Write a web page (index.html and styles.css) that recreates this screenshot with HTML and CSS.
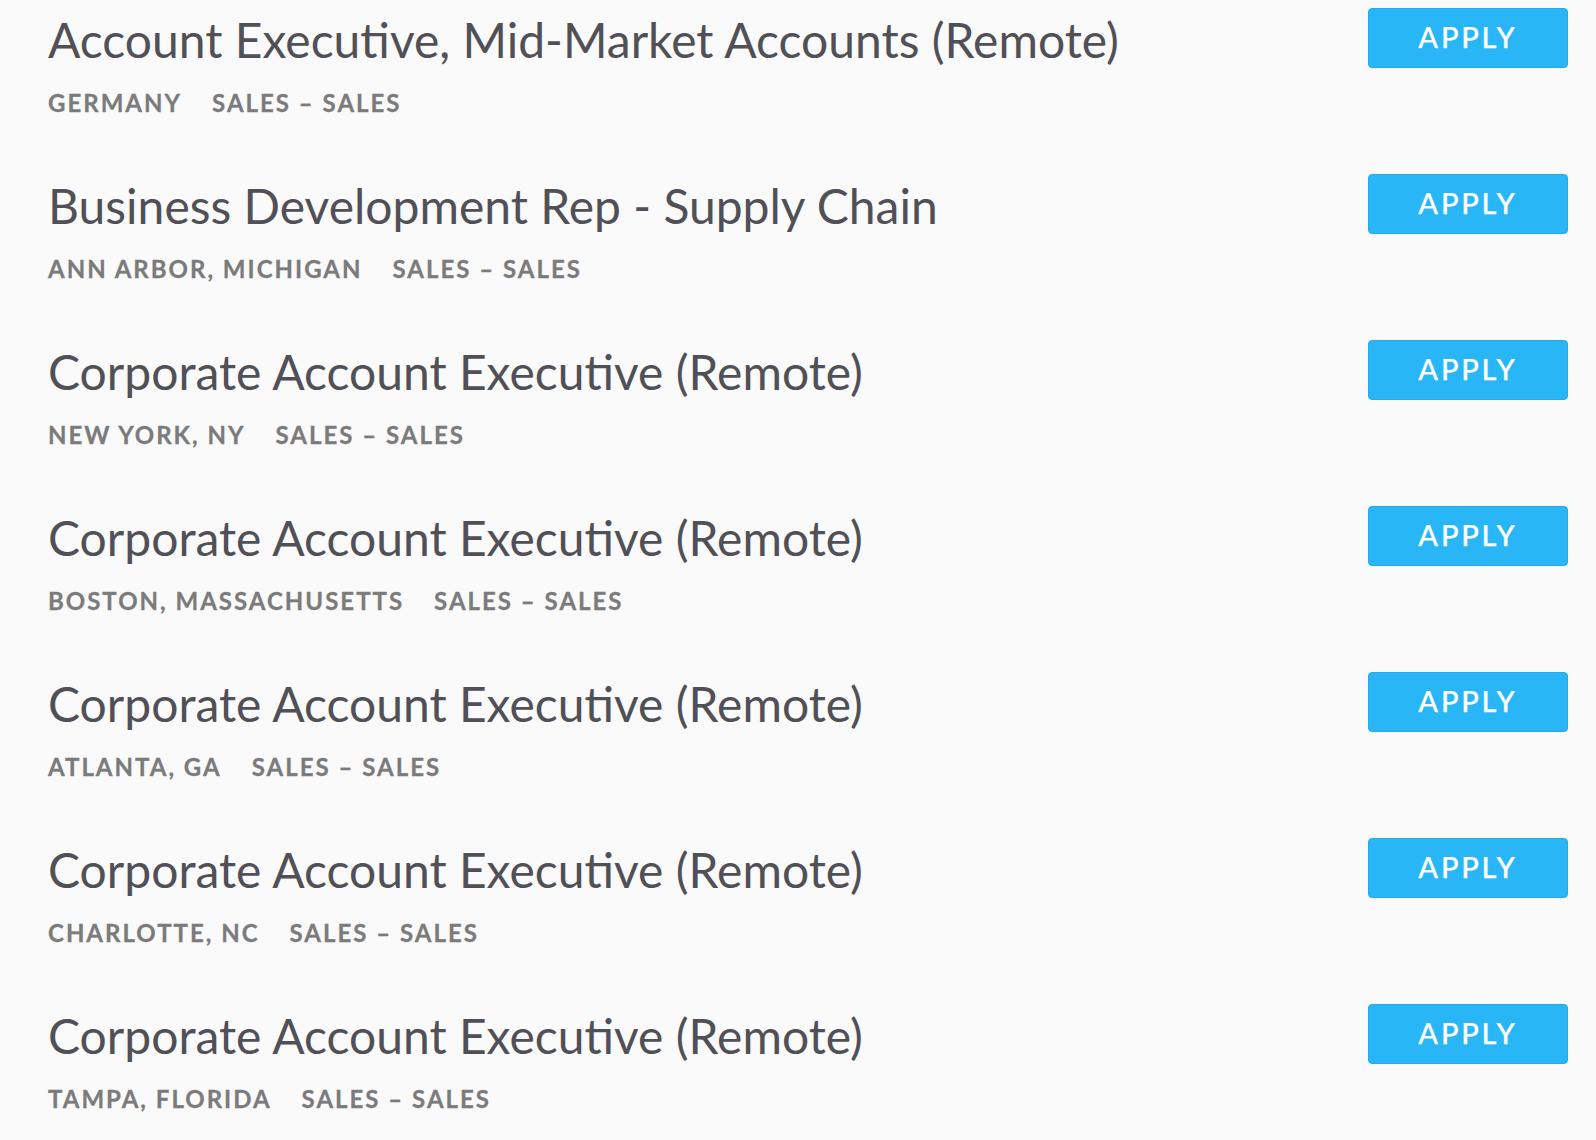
FILE: index.html
```html
<!DOCTYPE html>
<html>
<head>
<meta charset="utf-8">
<link rel="stylesheet" href="styles.css">
</head>
<body>
<ul class="jobs">
  <li class="job">
    <div class="info">
      <h2 class="title">Account Executive, Mid-Market Accounts (Remote)</h2>
      <div class="meta"><span>Germany</span><span>Sales – Sales</span></div>
    </div>
    <a class="apply">Apply</a>
  </li>
  <li class="job">
    <div class="info">
      <h2 class="title">Business Development Rep - Supply Chain</h2>
      <div class="meta"><span>Ann Arbor, Michigan</span><span>Sales – Sales</span></div>
    </div>
    <a class="apply">Apply</a>
  </li>
  <li class="job">
    <div class="info">
      <h2 class="title">Corporate Account Executive (Remote)</h2>
      <div class="meta"><span>New York, NY</span><span>Sales – Sales</span></div>
    </div>
    <a class="apply">Apply</a>
  </li>
  <li class="job">
    <div class="info">
      <h2 class="title">Corporate Account Executive (Remote)</h2>
      <div class="meta"><span>Boston, Massachusetts</span><span>Sales – Sales</span></div>
    </div>
    <a class="apply">Apply</a>
  </li>
  <li class="job">
    <div class="info">
      <h2 class="title">Corporate Account Executive (Remote)</h2>
      <div class="meta"><span>Atlanta, GA</span><span>Sales – Sales</span></div>
    </div>
    <a class="apply">Apply</a>
  </li>
  <li class="job">
    <div class="info">
      <h2 class="title">Corporate Account Executive (Remote)</h2>
      <div class="meta"><span>Charlotte, NC</span><span>Sales – Sales</span></div>
    </div>
    <a class="apply">Apply</a>
  </li>
  <li class="job">
    <div class="info">
      <h2 class="title">Corporate Account Executive (Remote)</h2>
      <div class="meta"><span>Tampa, Florida</span><span>Sales – Sales</span></div>
    </div>
    <a class="apply">Apply</a>
  </li>
</ul>
</body>
</html>
```
FILE: styles.css
```css
html, body {
  margin: 0;
  padding: 0;
  background: #fafafa;
}
body {
  font-family: Lato, "Open Sans", sans-serif;
  overflow: hidden;
}
.jobs {
  list-style: none;
  margin: 0;
  padding: 0 28px 0 48px;
}
.job {
  display: flex;
  justify-content: space-between;
  align-items: flex-start;
  height: 166px;
}
.info {
  display: flex;
  flex-direction: column;
}
.title {
  margin: 11px 0 0 0;
  font-size: 48px;
  line-height: 58px;
  font-weight: 400;
  color: #505056;
}
.meta {
  display: flex;
  gap: 30px;
  margin-top: 20px;
  font-size: 24px;
  line-height: 28px;
  font-weight: 700;
  letter-spacing: 2px;
  text-transform: uppercase;
  color: #7b7b7b;
  -webkit-text-stroke: 0.3px #7b7b7b;
}
.apply {
  margin-top: 8px;
  box-sizing: border-box;
  width: 200px;
  height: 60px;
  padding-bottom: 3px;
  display: flex;
  align-items: center;
  justify-content: center;
  background: #29b6f6;
  border: 1px solid #25abe9;
  border-radius: 4px;
  color: #fff;
  font-size: 29px;
  font-weight: 500;
  letter-spacing: 2.8px;
  text-transform: uppercase;
  -webkit-text-stroke: 0.25px #fff;
}
```
